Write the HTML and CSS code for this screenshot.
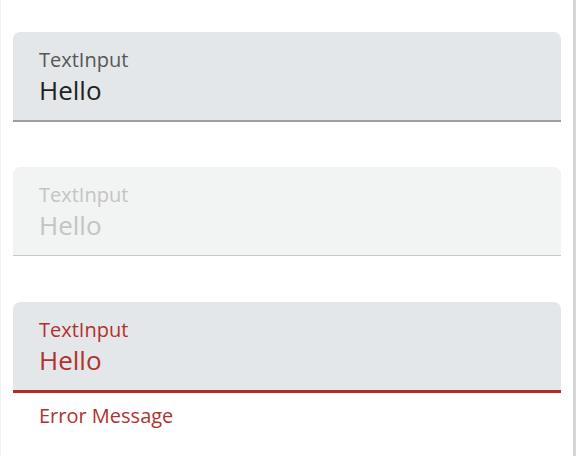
FILE: index.html
```html
<!DOCTYPE html>
<html>
<head>
<meta charset="utf-8">
<link rel="stylesheet" href="styles.css">
</head>
<body>
<div class="frame">
  <div class="field">
    <div class="box">
      <span class="label">TextInput</span>
      <span class="value">Hello</span>
    </div>
  </div>
  <div class="field disabled">
    <div class="box">
      <span class="label">TextInput</span>
      <span class="value">Hello</span>
    </div>
  </div>
  <div class="field error">
    <div class="box">
      <span class="label">TextInput</span>
      <span class="value">Hello</span>
    </div>
    <div class="message">Error Message</div>
  </div>
</div>
</body>
</html>
```
FILE: styles.css
```css
html, body { margin: 0; padding: 0; background: #fff; }
body { font-family: "Open Sans", "Noto Sans", sans-serif; }
.frame {
  width: 576px; height: 456px; box-sizing: border-box;
  border-left: 1px solid #f0f0f0;
  border-right: 3px solid #d3d5d7;
  padding: 32px 12px 0 12px;
  display: flex; flex-direction: column;
}
.field { width: 548px; }
.field + .field { margin-top: 45px; }
.field.error { margin-top: 46px; }
.box {
  height: 73px;
  background: #e4e7ea;
  border-radius: 7px 7px 0 0;
  border-bottom: 2px solid #9c9fa2;
  padding: 15px 26px 0;
  display: flex; flex-direction: column;
}
.label { font-size: 20px; line-height: 26px; color: #555758; }
.value { font-size: 26px; line-height: 34px; color: #1f2224; }
.disabled .box { background: #f2f3f3; border-bottom: 1px solid #c8c8c8; }
.disabled .label, .disabled .value { color: #c3c4c4; }
.error .label, .error .value { color: #b0322c; }
.error .box { border-bottom: 3px solid #b52a25; }
.message { color: #b0322c; font-size: 20px; line-height: 26px; padding: 10px 26px 0; }
```
